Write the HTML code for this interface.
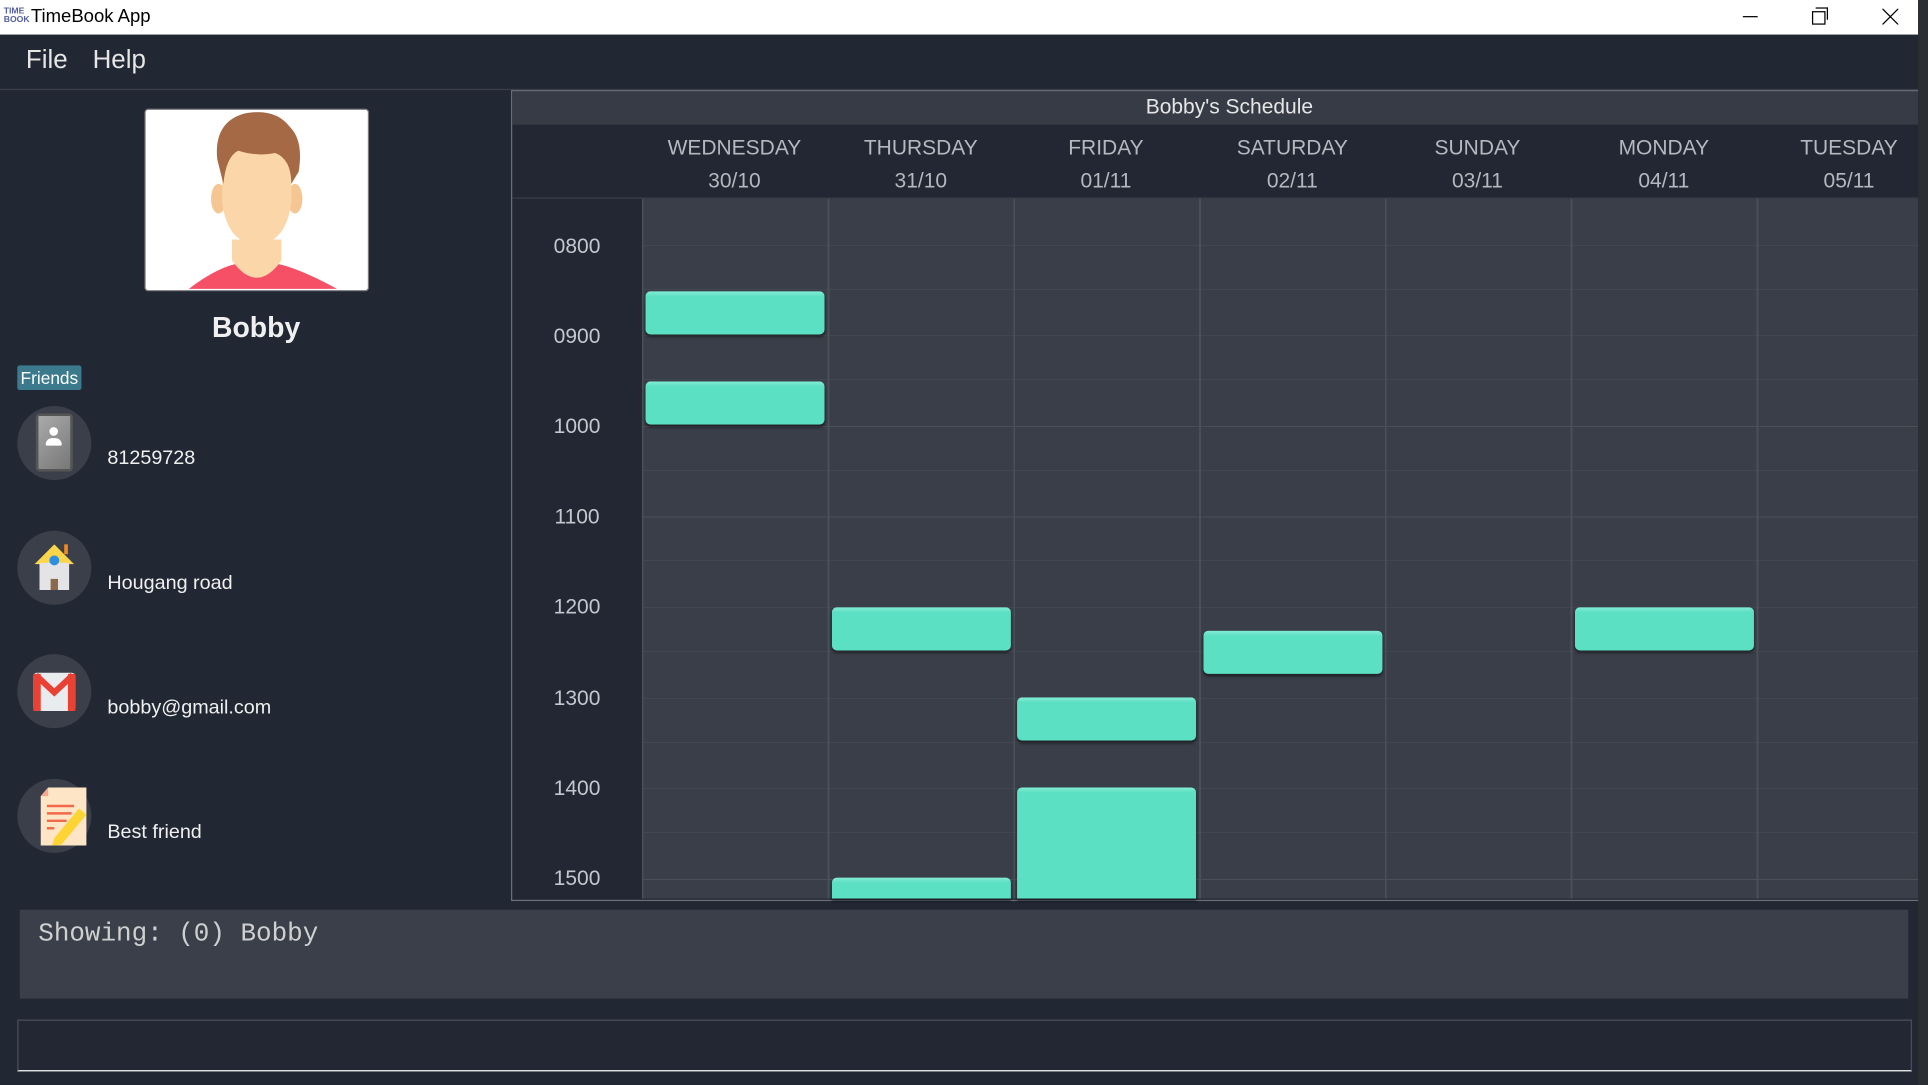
<!DOCTYPE html>
<html><head><meta charset="utf-8"><style>
html,body{margin:0;padding:0;background:#2b2e33;overflow:hidden;width:1928px;height:1084px}
#w{position:absolute;left:0;top:0;width:1562px;height:879px;transform:scale(1.23431);transform-origin:0 0;background:#212733;font-family:"Liberation Sans",sans-serif;overflow:hidden}
.a{position:absolute}
.tb{left:0;top:0;width:1554px;height:28px;background:#fff}
.menu{color:#e6e6e6;font-size:21px;top:37px}
.ct{color:#f0f0f0;font-size:16px;left:87px}
.circ{width:60px;height:60px;border-radius:50%;background:#3a3f4a;left:14px}
.day{color:#b4b8bf;font-size:17px;text-align:center;width:150px}
.tl{color:#c4c8ce;font-size:17px;width:105px;text-align:center;left:415px}
.ev{background:#5ce0c3;border-radius:4px;box-shadow:0 2px 2px rgba(0,0,0,.45);background-image:linear-gradient(#86ecd6,#5ce0c3 4px)}
</style></head><body><div id="w">
<div class="a tb"></div>
<div class="a" style="left:3px;top:6px;font-size:7px;line-height:7px;color:#5560a0;font-weight:bold">TIME<br>BOOK</div>
<div class="a" style="left:25px;top:5px;font-size:15px;color:#000">TimeBook App</div>
<div class="a" style="left:1412px;top:13px;width:12px;height:1px;background:#000"></div>
<div class="a" style="left:1468px;top:9px;width:9px;height:9px;border:1px solid #000;background:#fff"></div>
<div class="a" style="left:1471px;top:6px;width:9px;height:9px;border-top:1px solid #000;border-right:1px solid #000"></div>
<svg class="a" style="left:1525px;top:7px" width="13" height="13"><path d="M0 0L13 13M13 0L0 13" stroke="#000" stroke-width="1"/></svg>
<div class="a" style="left:1554px;top:0;width:8px;height:879px;background:#2b2e33"></div>
<div class="a menu" style="left:21px">File</div>
<div class="a menu" style="left:75px">Help</div>
<div class="a" style="left:0;top:72px;width:1554px;height:1px;background:#3a3f4a"></div>

<div class="a" style="left:117px;top:88px;width:180px;height:146px;background:#fff;border:1px solid #777;border-radius:3px;overflow:hidden">
<svg width="180" height="146" viewBox="0 0 180 146">
<path d="M35 145Q60 126 78 124L102 124Q120 126 155 145Z" fill="#f55066"/>
<path d="M70 105L70 122Q90 150 110 122L110 105Z" fill="#fbd6a8"/>
<ellipse cx="59" cy="72" rx="6" ry="12" fill="#f5c692"/><ellipse cx="121" cy="72" rx="6" ry="12" fill="#f5c692"/>
<path d="M62 40Q62 20 90 20Q118 20 118 40L118 75Q115 100 100 107L80 107Q65 100 62 75Z" fill="#fbd6a8"/>
<path d="M58 40Q55 10 80 3Q105 -2 117 14Q128 25 124 50L118 60Q118 40 105 35Q90 38 75 33Q65 38 63 60Z" fill="#a56a45"/>
</svg></div>
<div class="a" style="left:0;width:415px;top:252px;text-align:center;color:#f0f0f0;font-size:23px;font-weight:bold">Bobby</div>
<div class="a" style="left:14px;top:296px;width:52px;height:20px;background:#3b7a8c;border-radius:2px;color:#fff;font-size:14px;text-align:center;line-height:20px">Friends</div>

<div class="a circ" style="top:329px"></div>
<div class="a" style="left:29px;top:335px;width:30px;height:47px;background:linear-gradient(135deg,#aaa,#777);border:2px solid #555;border-radius:3px;box-sizing:border-box"></div>
<div class="a" style="left:40px;top:346px;width:7px;height:7px;border-radius:50%;background:#fff"></div>
<div class="a" style="left:37px;top:355px;width:13px;height:6px;border-radius:6px 6px 1px 1px;background:#fff"></div>
<div class="a ct" style="top:363px">81259728</div>

<div class="a circ" style="top:430px"></div>
<svg class="a" style="left:26px;top:437px" width="36" height="46"><path d="M2 20L18 4L34 20Z" fill="#fbd54a"/><rect x="6" y="19" width="24" height="22" fill="#e4e4e6"/><circle cx="18" cy="17" r="4" fill="#2d8fe0"/><rect x="15" y="32" width="6" height="9" fill="#8a6a4a"/><rect x="26" y="4" width="3" height="8" fill="#f08a20"/></svg>
<div class="a ct" style="top:464px">Hougang road</div>

<div class="a circ" style="top:530px"></div>
<svg class="a" style="left:26px;top:543px" width="36" height="36"><rect x="1" y="2" width="34" height="31" rx="3" fill="#e8ecef"/><path d="M3 4L18 18L33 4" stroke="#e94235" stroke-width="5" fill="none"/><rect x="1" y="3" width="6" height="30" fill="#e94235"/><rect x="29" y="3" width="6" height="30" fill="#e94235"/></svg>
<div class="a ct" style="top:565px">bobby@gmail.com</div>

<div class="a circ" style="top:631px"></div>
<svg class="a" style="left:30px;top:637px" width="40" height="48"><path d="M3 8L9 1L46 1L46 50L3 50Z" fill="#fde5c6"/><path d="M3 8L9 1L9 8Z" fill="#f8a890"/><g stroke="#f06a4a" stroke-width="2"><path d="M8 16H30M8 22H28M8 28H24M8 34H14"/></g><path d="M14 42L34 18L40 23L20 47L12 49Z" fill="#fcd434"/></svg>
<div class="a ct" style="top:666px">Best friend</div>

<!-- schedule -->
<div class="a" style="left:414px;top:73px;width:1139px;height:655px;border:1px solid #6a6f78;border-right:none;background:#222733;overflow:hidden">
<div class="a" style="left:0;top:0;width:1140px;height:27px;background:#363b46"></div>
</div>
<div class="a" style="left:414px;top:77px;width:1164px;text-align:center;color:#e6e6e6;font-size:17px">Bobby's Schedule</div>
<div class="a" style="left:415px;top:160px;width:1139px;height:1px;background:#3a3f4a"></div>
<div class="a" style="left:520px;top:161px;width:1034px;height:567px;background:#393e48;
background-image:repeating-linear-gradient(to bottom,transparent 0,transparent 37.4px,#4a4f58 37.4px,#4a4f58 38px,transparent 38px,transparent 73.4px),repeating-linear-gradient(to right,#4a4f58 0,#4a4f58 1.5px,transparent 1.5px,transparent 150.5px)"></div>
<div class="a" style="left:520px;top:161px;width:1034px;height:567px;background-image:repeating-linear-gradient(to bottom,transparent 0,transparent 73px,#4a4f58 73px,#4a4f58 73.4px)"></div>

<div class="a day" style="left:520px;top:110px">WEDNESDAY<br><span style="line-height:34px">30/10</span></div>
<div class="a day" style="left:671px;top:110px">THURSDAY<br><span style="line-height:34px">31/10</span></div>
<div class="a day" style="left:821px;top:110px">FRIDAY<br><span style="line-height:34px">01/11</span></div>
<div class="a day" style="left:972px;top:110px">SATURDAY<br><span style="line-height:34px">02/11</span></div>
<div class="a day" style="left:1122px;top:110px">SUNDAY<br><span style="line-height:34px">03/11</span></div>
<div class="a day" style="left:1273px;top:110px">MONDAY<br><span style="line-height:34px">04/11</span></div>
<div class="a day" style="left:1423px;top:110px">TUESDAY<br><span style="line-height:34px">05/11</span></div>

<div class="a tl" style="top:190px">0800</div>
<div class="a tl" style="top:263px">0900</div>
<div class="a tl" style="top:336px">1000</div>
<div class="a tl" style="top:409px">1100</div>
<div class="a tl" style="top:482px">1200</div>
<div class="a tl" style="top:556px">1300</div>
<div class="a tl" style="top:629px">1400</div>
<div class="a tl" style="top:702px">1500</div>

<div class="a ev" style="left:523px;top:236px;width:145px;height:35px"></div>
<div class="a ev" style="left:523px;top:309px;width:145px;height:35px"></div>
<div class="a ev" style="left:674px;top:492px;width:145px;height:35px"></div>
<div class="a ev" style="left:824px;top:565px;width:145px;height:35px"></div>
<div class="a ev" style="left:824px;top:638px;width:145px;height:90px;border-radius:4px 4px 0 0"></div>
<div class="a ev" style="left:975px;top:511px;width:145px;height:35px"></div>
<div class="a ev" style="left:1276px;top:492px;width:145px;height:35px"></div>
<div class="a ev" style="left:674px;top:711px;width:145px;height:17px;border-radius:4px 4px 0 0"></div>

<div class="a" style="left:16px;top:737px;width:1530px;height:72px;background:#3a3f4a"></div>
<div class="a" style="left:31px;top:746px;color:#d0d0d0;font-size:21px;font-family:'Liberation Mono',monospace">Showing: (0) Bobby</div>
<div class="a" style="left:14px;top:826px;width:1533px;height:40px;border:1px solid #4a4f5a;border-bottom:1px solid #fff;background:#222733"></div>
</div></body></html>
